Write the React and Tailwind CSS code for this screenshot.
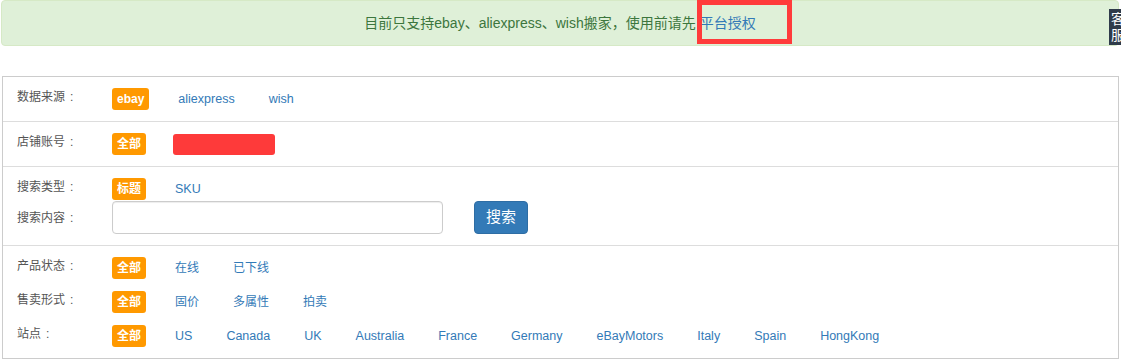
import React from 'react';

const cjk = (s) => /[\u4e00-\u9fff]/.test(s);

function Opt({ label, active }) {
  if (active) {
    return (
      <span className="inline-flex h-[22px] items-center rounded-[3px] bg-[#ff9900] px-[5px] text-[12px] font-bold text-white">
        {label}
      </span>
    );
  }
  return (
    <a className={`px-[5px] leading-[22px] text-[#337ab7] ${cjk(label) ? 'text-[12px]' : 'text-[12.5px]'}`}>
      {label}
    </a>
  );
}

function Label({ title, className = '' }) {
  return (
    <div className={`w-[95px] shrink-0 text-[12px] leading-[18px] text-[#555] ${className}`}>
      {title}
      <span className="ml-[5px]">:</span>
    </div>
  );
}

function OptRow({ title, options }) {
  return (
    <div className="flex h-[22px] items-start">
      <Label title={title} />
      <div className="flex items-center gap-6">
        {options.map((o, i) => (
          <Opt key={o} label={o} active={i === 0} />
        ))}
      </div>
    </div>
  );
}

export default function App() {
  return (
    <div className="relative h-[359px] w-full overflow-hidden bg-white font-['Liberation_Sans','Noto_Sans_CJK_SC',sans-serif]">
      {/* notice */}
      <div className="ml-[1px] mr-[2px] flex h-[46px] items-center justify-center rounded-[4px] border border-[#d6e9c6] bg-[#dff0d8] text-[14px] text-[#3c763d]">
        <span>
          目前只支持ebay、aliexpress、wish搬家，使用前请先<a className="ml-[4px] text-[#337ab7]">平台授权</a>
        </span>
      </div>
      <div className="absolute left-[697px] top-0 h-[44px] w-[95px] border-[5px] border-[#ff3b3b]" />
      <div className="absolute left-[1109px] top-[9px] h-[36px] w-[40px] bg-[#2f3b4a] px-[2px] pt-[2px] text-[14px] leading-[16px] text-white">
        <div>客</div>
        <div>服</div>
      </div>

      {/* filters */}
      <div className="ml-[2px] mr-[2px] mt-[30px] border border-[#ccc]">
        <div className="border-b border-[#ddd] py-[11px] pl-[14px]">
          <OptRow title="数据来源" options={['ebay', 'aliexpress', 'wish']} />
        </div>
        <div className="border-b border-[#ddd] py-[11px] pl-[14px]">
          <div className="flex h-[22px] items-start">
            <Label title="店铺账号" />
            <div className="flex items-center gap-6">
              <Opt label="全部" active />
              <span className="ml-[3px] h-[21px] w-[102px] rounded-[3px] bg-[#fe3a3a]" />
            </div>
          </div>
        </div>
        <div className="border-b border-[#ddd] py-[11px] pl-[14px]">
          <OptRow title="搜索类型" options={['标题', 'SKU']} />
          <div className="mt-[1px] flex h-[33px] items-center">
            <Label title="搜索内容" />
            <input
              type="text"
              className="h-[33px] w-[331px] rounded-[4px] border border-[#ccc] px-3 text-[13px] shadow-[inset_0_1px_1px_rgba(0,0,0,0.075)] outline-none"
            />
            <button className="ml-[31px] h-[33px] w-[54px] rounded-[4px] border border-[#2e6da4] bg-[#337ab7] text-[15px] text-white">
              搜索
            </button>
          </div>
        </div>
        <div className="flex flex-col gap-[12px] py-[11px] pl-[14px]">
          <OptRow title="产品状态" options={['全部', '在线', '已下线']} />
          <OptRow title="售卖形式" options={['全部', '固价', '多属性', '拍卖']} />
          <OptRow
            title="站点"
            options={['全部', 'US', 'Canada', 'UK', 'Australia', 'France', 'Germany', 'eBayMotors', 'Italy', 'Spain', 'HongKong']}
          />
        </div>
      </div>
    </div>
  );
}
